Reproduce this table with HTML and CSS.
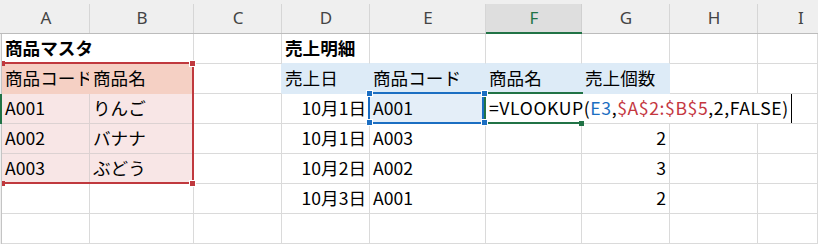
FILE: index.html
```html
<!DOCTYPE html>
<html lang="ja">
<head>
<meta charset="utf-8">
<title>VLOOKUP</title>
<link rel="stylesheet" href="styles.css">
</head>
<body>
<div class="sheet">
  <div class="corner"></div>
  <div class="ch">A</div><div class="ch">B</div><div class="ch">C</div><div class="ch">D</div><div class="ch">E</div><div class="ch sel">F</div><div class="ch">G</div><div class="ch">H</div><div class="ch last">I</div>

  <div class="rh"></div>
  <div class="c b ov">商品マスタ</div><div class="c"></div><div class="c"></div>
  <div class="c b tb">売上明細</div><div class="c tb"></div><div class="c tb"></div><div class="c tb"></div><div class="c"></div><div class="c"></div>

  <div class="rh"></div>
  <div class="c sal">商品コード</div><div class="c sal">商品名</div><div class="c rb"></div>
  <div class="c hd">売上日</div><div class="c hd">商品コード</div><div class="c hd">商品名</div><div class="c hd">売上個数</div><div class="c"></div><div class="c"></div>

  <div class="rh act"></div>
  <div class="c pk">A001</div><div class="c pk">りんご</div><div class="c"></div>
  <div class="c r">10月1日</div><div class="c bt">A001</div>
  <div class="c edit"><div class="editbox"><span>=VLOOKUP(</span><span class="ref1">E3</span><span>,</span><span class="ref2">$A$2:$B$5</span><span>,2,FALSE)</span><span class="cur"></span></div></div>
  <div class="c"></div><div class="c"></div><div class="c"></div>

  <div class="rh"></div>
  <div class="c pk">A002</div><div class="c pk">バナナ</div><div class="c"></div>
  <div class="c r">10月1日</div><div class="c">A003</div><div class="c"></div><div class="c r">2</div><div class="c"></div><div class="c"></div>

  <div class="rh"></div>
  <div class="c pk">A003</div><div class="c pk">ぶどう</div><div class="c"></div>
  <div class="c r">10月2日</div><div class="c">A002</div><div class="c"></div><div class="c r">3</div><div class="c"></div><div class="c"></div>

  <div class="rh"></div>
  <div class="c"></div><div class="c"></div><div class="c"></div>
  <div class="c r">10月3日</div><div class="c">A001</div><div class="c"></div><div class="c r">2</div><div class="c"></div><div class="c"></div>

  <div class="rh"></div>
  <div class="c"></div><div class="c"></div><div class="c"></div><div class="c"></div><div class="c"></div><div class="c"></div><div class="c"></div><div class="c"></div><div class="c"></div>

  <div class="frame red-frame"></div>
  <div class="hdl red side h-r1"></div>
  <div class="hdl red h-r2"></div>
  <div class="hdl red side h-r3"></div>
  <div class="hdl red h-r4"></div>

  <div class="frame green-frame"></div>
  <div class="hdl green h-g"></div>

  <div class="frame blue-frame"></div>
  <div class="hdl blue h-b1"></div>
  <div class="hdl blue h-b2"></div>
  <div class="hdl blue h-b3"></div>
  <div class="hdl blue h-b4"></div>
</div>
</body>
</html>
```
FILE: styles.css
```css
html, body {
  margin: 0;
  padding: 0;
  background: #fff;
}
body {
  width: 818px;
  height: 245px;
  overflow: hidden;
}
.sheet {
  position: relative;
  display: grid;
  grid-template-columns: 2px 88px 104px 88px 88px 116px 96px 88px 88px 60px;
  grid-template-rows: 34px repeat(7, 30px);
  font-family: "Noto Sans CJK JP", sans-serif;
  font-size: 17.6px;
  color: #000;
}
.corner {
  background: #efefef;
  border-bottom: 1px solid #bcbcbc;
}
.ch {
  box-sizing: border-box;
  border-bottom: 1px solid #bcbcbc;
  background: linear-gradient(#d6d6d6, #d6d6d6) right bottom / 1px 29px no-repeat, #efefef;
  font-family: "Noto Sans", sans-serif;
  font-size: 17px;
  color: #444;
  text-align: center;
  padding-top: 3px;
  line-height: 30px;
}
.ch.last {
  text-align: left;
  padding-left: 40px;
  background: #efefef;
}
.ch.sel {
  border-bottom: 2px solid #217346;
  background: linear-gradient(#d0d0d0, #d0d0d0) right bottom / 1px 28px no-repeat, linear-gradient(#efefef 0 4px, #dedede 4px);
  color: #217346;
  line-height: 29px;
}
.rh {
  box-sizing: border-box;
  background: #efefef;
  border-right: 1px solid #c4c4c4;
}
.rh.act {
  background: #217346;
  border-right-color: #217346;
}
.c {
  box-sizing: border-box;
  border-right: 1px solid #dadada;
  border-bottom: 1px solid #dadada;
  padding: 0 3px 2px;
  line-height: 27px;
  white-space: nowrap;
  overflow: hidden;
}
.c.r { text-align: right; }
.c.b { font-weight: 700; }
.c.ov { overflow: visible; border-right-color: #fff; }
.c.tb { border-bottom-color: #ddebf7; }
.c.rb { border-right-color: #ddebf7; }
.c.hd { background: #ddebf7; border-color: #ddebf7; }
.c.sal { background: #f5d0c4; border-color: #f5d0c4; }
.c.pk { background: #f8e6e6; border-color: #dcd2d2; }
.c.bt { background: #e4eef8; }
.c.edit { overflow: visible; position: relative; }

.editbox {
  position: absolute;
  left: 0;
  top: 0;
  z-index: 2;
  box-sizing: border-box;
  height: 29px;
  padding: 0 5px 2px 3px;
  background: #fff;
  line-height: 27px;
  letter-spacing: 0.6px;
  white-space: nowrap;
}
.ref1 { color: #1b6ec2; }
.ref2 { color: #c4373f; }
.cur {
  display: inline-block;
  width: 1px;
  height: 29px;
  margin-bottom: -2px;
  margin-left: 2px;
  vertical-align: top;
  background: #000;
}

.frame {
  position: absolute;
  box-sizing: border-box;
  pointer-events: none;
}
.red-frame {
  left: 2px;
  top: 62px;
  width: 192px;
  height: 122px;
  border: 2px solid #c0393e;
  border-left: none;
  z-index: 3;
}
.green-frame {
  left: 484px;
  top: 92px;
  width: 99px;
  height: 32px;
  border: 2px solid #217346;
  border-right: none;
  z-index: 3;
}
.blue-frame {
  left: 368px;
  top: 92px;
  width: 116px;
  height: 32px;
  border: 2px solid #1b6ec2;
  z-index: 4;
}
.hdl {
  position: absolute;
  width: 5px;
  height: 5px;
  z-index: 5;
  box-shadow: 0 0 0 1px #fff;
}
.hdl.side { width: 3px; box-shadow: none; }
.hdl.red { background: #c0393e; }
.hdl.blue { background: #1b6ec2; }
.hdl.green { background: #217346; box-shadow: none; }
.h-r1 { left: 2px; top: 61px; }
.h-r2 { left: 190px; top: 61px; }
.h-r3 { left: 2px; top: 181px; }
.h-r4 { left: 190px; top: 181px; }
.h-g { left: 579px; top: 121px; }
.h-b1 { left: 367px; top: 91px; }
.h-b2 { left: 482px; top: 91px; }
.h-b3 { left: 367px; top: 120px; }
.h-b4 { left: 482px; top: 120px; }
```
